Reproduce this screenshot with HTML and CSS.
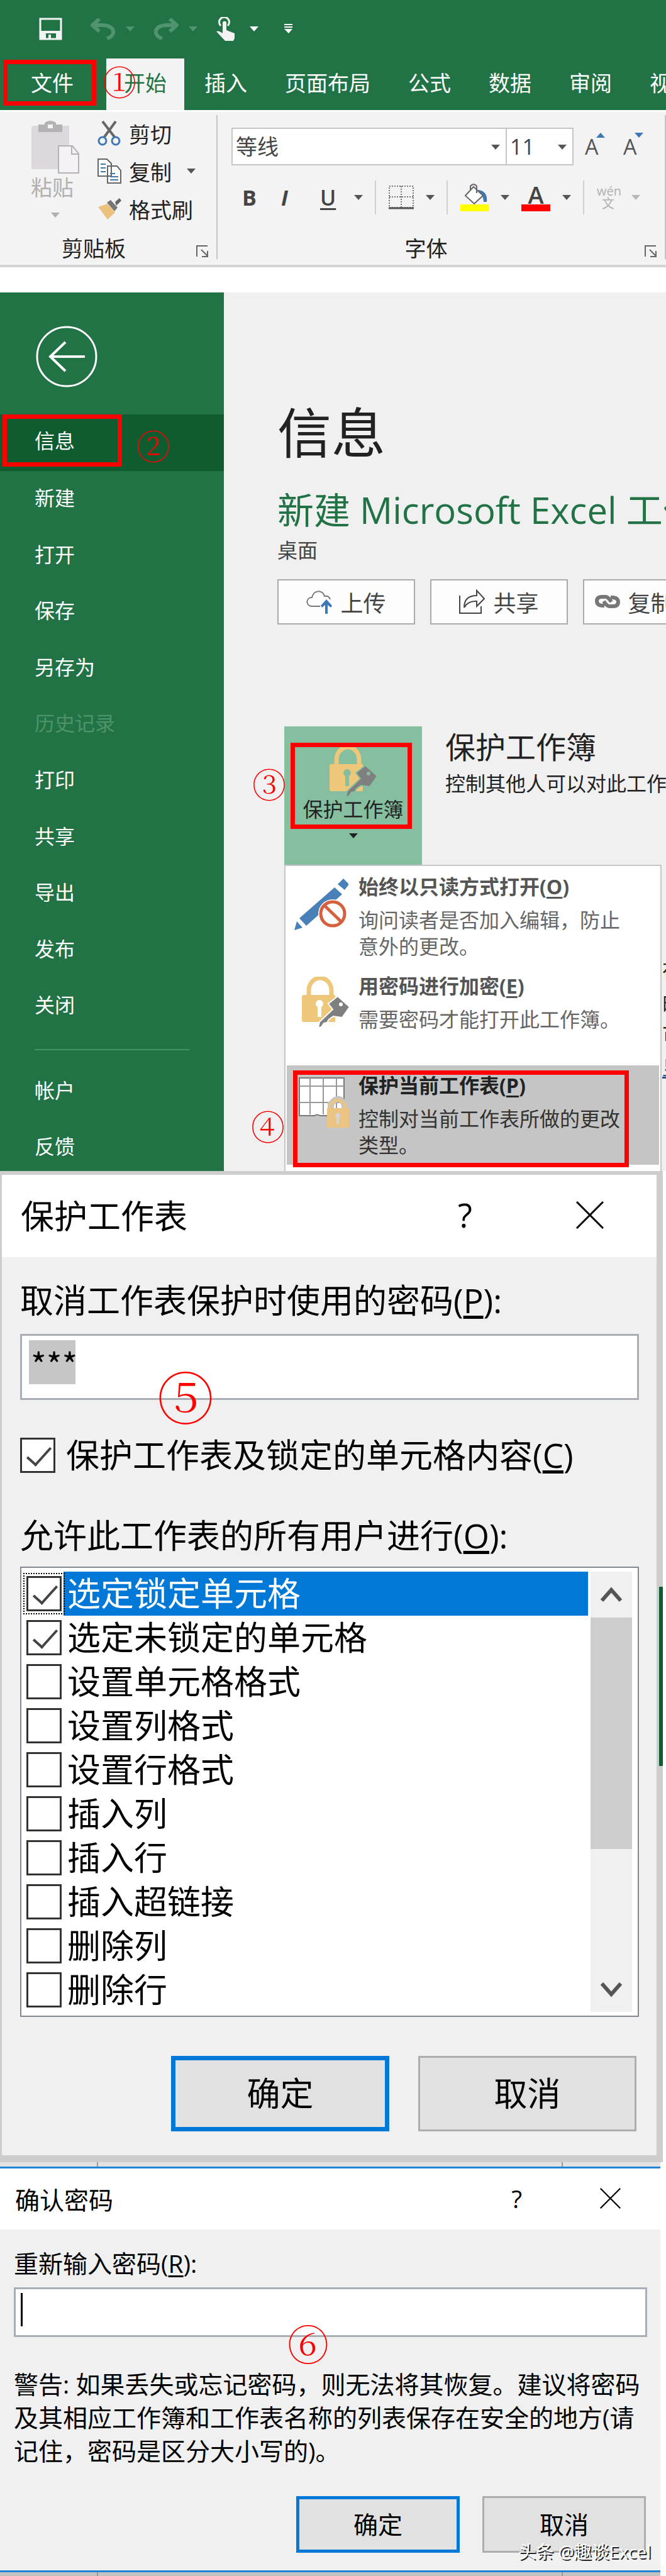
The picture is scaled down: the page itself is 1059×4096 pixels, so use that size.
FILE: index.html
```html
<!DOCTYPE html>
<html lang="zh-CN">
<head>
    <meta charset="UTF-8">
    <meta name="viewport" content="width=device-width, initial-scale=1.0">
    <title>保护工作表</title>
    <link rel="stylesheet" href="styles.css">
</head>
<body>
    <svg class="defs" aria-hidden="true">
        <symbol id="lock-key" viewBox="0 0 76 82">
            <path d="M11 30V22a17 19 0 0 1 36 0v8" fill="none" stroke="#efc77b" stroke-width="7"/>
            <path d="M3 29h50v43H3a3 3 0 0 1-3-3V32a3 3 0 0 1 3-3z" fill="#efc77b"/>
            <circle cx="28" cy="43" r="6" fill="var(--hole)"/>
            <path d="M25 44h6v20h-6z" fill="var(--hole)"/>
            <path d="M26 81l2-9 21-20-7-9 15-12 19 17-12 17-14-2-7 5-3 5-5 1-4 6z" fill="#7f7f7f" stroke="var(--hole)" stroke-width="2"/>
            <circle cx="62" cy="44" r="3" fill="var(--hole)"/>
        </symbol>
        <symbol id="launcher" viewBox="0 0 20 20">
            <path d="M1 18V1h17M8 7l10 10M18 9v9H9" fill="none" stroke="#666" stroke-width="2"/>
        </symbol>
    </svg>

    <header class="excel-top">
        <div class="quick-bar">
            <button class="save" aria-label="保存">
                <svg width="37" height="36" viewBox="0 0 37 36"><path d="M2 2h33v32H2z" fill="none" stroke="#f3f3f3" stroke-width="3"/><path d="M2 21h33v13h-8v-9H11v9H2z" fill="#f3f3f3"/><path d="M15 27h4v7h-4z" fill="#f3f3f3"/></svg>
            </button>
            <button class="undo dim" aria-label="撤消">
                <svg width="40" height="34" viewBox="0 0 40 34"><path d="M14 1L3 11l11 10M4 11h16c21 1 20 18 6 21" fill="none" stroke="currentColor" stroke-width="6"/></svg>
                <i class="caret"></i>
            </button>
            <button class="undo dim" aria-label="恢复">
                <svg width="40" height="34" viewBox="0 0 40 34"><path d="M26 1l11 10-11 10M36 11H20C-1 12 0 29 14 32" fill="none" stroke="currentColor" stroke-width="6"/></svg>
                <i class="caret"></i>
            </button>
            <button class="touch" aria-label="触摸模式">
                <svg width="29" height="38" viewBox="0 0 29 38"><path d="M7 14A8 8 0 1 1 18 14" fill="none" stroke="#f3f3f3" stroke-width="3"/><path d="M10 8q3-3 6 0v13l13 5v8l-2 4H14L0 23q4-2 10 3z" fill="#f3f3f3"/></svg>
                <i class="caret"></i>
            </button>
            <button class="customize" aria-label="自定义快速访问工具栏">
                <svg width="13" height="15" viewBox="0 0 13 15"><path d="M0 0h13v2H0zM0 4h13v2H0zM0 8h13l-6 7z" fill="#fff"/></svg>
            </button>
        </div>
        <nav class="tabs">
            <button class="tab file">文件</button>
            <button class="tab active">开始</button>
            <button class="tab">插入</button>
            <button class="tab">页面布局</button>
            <button class="tab">公式</button>
            <button class="tab">数据</button>
            <button class="tab">审阅</button>
            <button class="tab">视图</button>
            <span class="mark mark-1">①</span>
        </nav>
    </header>

    <section class="ribbon">
        <div class="group clipboard">
            <div class="group-body">
                <button class="paste">
                    <svg width="76" height="84" viewBox="0 0 76 84"><path d="M3 8h57v69H0V11z" fill="#dcd8dc"/><path d="M11 6h10V3q9-6 18 0v3h10v12H11z" fill="#b4b2b4"/><path d="M26 6h8v6h-8z" fill="#f3f3f3"/><path d="M43 40h22l10 12v31H43z" fill="#f5f2f7" stroke="#b4b2b4" stroke-width="2"/><path d="M64 40v13h11" fill="none" stroke="#b4b2b4" stroke-width="2"/></svg>
                    <span>粘贴</span>
                    <i class="caret"></i>
                </button>
                <div class="commands">
                    <button>
                        <svg width="38" height="40" viewBox="0 0 38 40"><path d="M8 1l20 26M29 1L10 27" stroke="#666" stroke-width="4"/><ellipse cx="8" cy="32" rx="6" ry="6" fill="none" stroke="#4178b0" stroke-width="3"/><ellipse cx="29" cy="32" rx="6" ry="6" fill="none" stroke="#4178b0" stroke-width="3"/></svg>
                        剪切
                    </button>
                    <button>
                        <svg width="38" height="40" viewBox="0 0 38 40"><path d="M1 1h14l7 7v20H1zM16 12h15l6 7v20H16z" fill="#fff" stroke="#666" stroke-width="2"/><path d="M5 9h8M5 15h8M5 21h8M20 24h8M20 29h13M20 34h13" stroke="#4178b0" stroke-width="2"/></svg>
                        复制
                        <i class="caret"></i>
                    </button>
                    <button>
                        <svg width="38" height="34" viewBox="0 0 38 34"><path d="M1 14l15-5 12 14-12 11z" fill="#ebc17c"/><path d="M15 7l6-4 11 12-5 6z" fill="#777"/><path d="M28 6l7-6 3 4-8 8z" fill="#666"/></svg>
                        格式刷
                    </button>
                </div>
            </div>
            <div class="group-foot">剪贴板<svg class="launcher"><use href="#launcher"/></svg></div>
        </div>

        <div class="group font">
            <div class="group-body">
                <div class="font-row">
                    <div class="pick pick-font">
                        <select aria-label="字体"><option>等线</option></select>
                        <i class="caret"></i>
                    </div>
                    <div class="pick pick-size">
                        <select aria-label="字号"><option>11</option></select>
                        <i class="caret"></i>
                    </div>
                    <button class="resize" aria-label="增大字号">A<i class="caret up"></i></button>
                    <button class="resize" aria-label="减小字号">A<i class="caret"></i></button>
                </div>
                <div class="format-row">
                    <button class="letter"><b>B</b></button>
                    <button class="letter"><b><em>I</em></b></button>
                    <button class="letter underline"><u>U</u></button>
                    <button class="more" aria-label="下划线选项"><i class="caret"></i></button>
                    <span class="rule"></span>
                    <button aria-label="边框"><svg width="40" height="38" viewBox="0 0 40 38"><path d="M1 1h38v34H1zM20 1v34M1 18h38" fill="none" stroke="#777" stroke-width="2" stroke-dasharray="2 2"/><path d="M0 36h40" stroke="#555" stroke-width="3"/></svg></button>
                    <button class="more" aria-label="边框选项"><i class="caret"></i></button>
                    <span class="rule"></span>
                    <button aria-label="填充颜色"><svg width="45" height="44" viewBox="0 0 45 44"><path d="M28 10q16 2 14 19h-5q0-11-9-13z" fill="#3d76b4"/><path d="M21 5l15 14-14 13L8 19z" fill="#fff" stroke="#666" stroke-width="2"/><path d="M16 11V4q5-6 10 0v11" fill="none" stroke="#666" stroke-width="2"/><path d="M0 33h45v11H0z" fill="#ff0"/></svg></button>
                    <button class="more" aria-label="填充颜色选项"><i class="caret"></i></button>
                    <button class="color-a">A</button>
                    <button class="more" aria-label="字体颜色选项"><i class="caret"></i></button>
                    <span class="rule"></span>
                    <button class="pinyin"><span>wén</span><span>文</span></button>
                    <button class="more pale" aria-label="拼音选项"><i class="caret"></i></button>
                </div>
            </div>
            <div class="group-foot">字体<svg class="launcher"><use href="#launcher"/></svg></div>
        </div>
    </section>

    <section class="backstage">
        <nav class="side">
            <button class="back" aria-label="返回">
                <svg width="98" height="98" viewBox="0 0 98 98"><circle cx="49" cy="49" r="47" fill="none" stroke="#fff" stroke-width="3"/><path d="M78 49H24M47 26L23 49l24 23" fill="none" stroke="#fff" stroke-width="4"/></svg>
            </button>
            <ul class="side-main">
                <li class="current"><a href="#">信息</a><span class="mark mark-2">②</span></li>
                <li><a href="#">新建</a></li>
                <li><a href="#">打开</a></li>
                <li><a href="#">保存</a></li>
                <li><a href="#">另存为</a></li>
                <li class="off"><a href="#">历史记录</a></li>
                <li><a href="#">打印</a></li>
                <li><a href="#">共享</a></li>
                <li><a href="#">导出</a></li>
                <li><a href="#">发布</a></li>
                <li><a href="#">关闭</a></li>
            </ul>
            <hr>
            <ul class="side-more">
                <li><a href="#">帐户</a></li>
                <li><a href="#">反馈</a></li>
            </ul>
        </nav>

        <main class="info">
            <h1>信息</h1>
            <h2>新建 Microsoft Excel 工作表</h2>
            <p class="place">桌面</p>
            <div class="actions">
                <button>
                    <svg width="42" height="38" viewBox="0 0 42 38"><path d="M22 26H8C-2 24 0 12 9 12 12-1 27 0 29 10q7-1 9 5" fill="none" stroke="#777" stroke-width="2"/><path d="M32 15l9 10-2 3-5-4v14h-4V24l-5 4-2-3z" fill="#3f77b5"/></svg>
                    上传
                </button>
                <button>
                    <svg width="42" height="40" viewBox="0 0 42 40"><path d="M1 10v28h34V27M8 29q0-19 20-19V2l12 13-12 12v-8q-14-1-20 10z" fill="none" stroke="#444" stroke-width="2"/></svg>
                    共享
                </button>
                <button class="copy-path">
                    <svg width="40" height="24" viewBox="0 0 40 24"><path d="M15 18h-4q-8-1-8-7 0-7 8-7h6q4 0 9 8M25 5h4q8 1 8 7 0 7-8 7h-6q-4 0-9-8" fill="none" stroke="#777" stroke-width="6"/></svg>
                    复制路径
                </button>
            </div>

            <div class="protect">
                <button class="protect-btn">
                    <svg width="76" height="82"><use href="#lock-key"/></svg>
                    <span>保护工作簿</span>
                    <i class="caret"></i>
                </button>
                <div class="protect-text">
                    <h3>保护工作簿</h3>
                    <p>控制其他人可以对此工作簿所做的更改类型。</p>
                </div>
                <span class="mark mark-3">③</span>

                <ul class="menu">
                    <li>
                        <svg width="86" height="84" viewBox="0 0 86 84"><path d="M0 84l4-14 9 10zM8 65l56-49 12 11-57 50zM69 11l9-9 9 9-7 9z" fill="#4a80b8" /><circle cx="61" cy="58" r="23" fill="#fff"/><circle cx="61" cy="58" r="19" fill="none" stroke="#d65f3d" stroke-width="5"/><path d="M47 44l28 27" stroke="#d65f3d" stroke-width="5"/></svg>
                        <div><h4>始终以只读方式打开(<u>O</u>)</h4><p>询问读者是否加入编辑，防止<br>意外的更改。</p></div>
                    </li>
                    <li>
                        <svg class="lock" width="76" height="82"><use href="#lock-key"/></svg>
                        <div><h4>用密码进行加密(<u>E</u>)</h4><p>需要密码才能打开此工作簿。</p></div>
                    </li>
                    <li class="hover">
                        <svg width="82" height="82" viewBox="0 0 82 82"><path d="M1 1h71v60H34q-5-3-9 0H1z" fill="#fff" stroke="#777" stroke-width="2"/><path d="M18 1v58M39 1v58M60 1v58M1 14h71M1 40h71" stroke="#999" stroke-width="2"/><path d="M51 50V43q12-17 22 0v7" fill="none" stroke="#c5c5c5" stroke-width="10"/><path d="M50 50V45q12-18 24 0v7" fill="none" stroke="#ebc382" stroke-width="5"/><path d="M45 49h35v31H45z" fill="#ebc382"/><circle cx="62" cy="61" r="4" fill="#d5d5d5"/><path d="M60 61h4v13h-4z" fill="#d5d5d5"/></svg>
                        <div><h4>保护当前工作表(<u>P</u>)</h4><p>控制对当前工作表所做的更改<br>类型。</p></div>
                        <span class="mark mark-4">④</span>
                    </li>
                </ul>
            </div>
            <div class="behind">
                <p>在</p>
                <p>的</p>
                <p>可</p>
                <p class="link">显</p>
            </div>
        </main>
    </section>

    <section class="desk">
        <form class="dialog">
            <div class="title-bar">
                <h2>保护工作表</h2>
                <button type="button" class="help">?</button>
                <button type="button" aria-label="关闭"><svg width="44" height="44" viewBox="0 0 44 44"><path d="M1 1l42 42M43 1L1 43" stroke="#000" stroke-width="3"/></svg></button>
            </div>
            <div class="dialog-body">
                <label for="password">取消工作表保护时使用的密码(<u>P</u>):</label>
                <div class="field">
                    <input type="text" id="password" value="***">
                    <span class="mark mark-5">⑤</span>
                </div>
                <label class="check-line"><input type="checkbox" checked> <span>保护工作表及锁定的单元格内容(<u>C</u>)</span></label>
                <p class="list-title">允许此工作表的所有用户进行(<u>O</u>):</p>
                <div class="list">
                    <div class="rows">
                        <label class="selected"><input type="checkbox" checked><span>选定锁定单元格</span></label>
                        <label><input type="checkbox" checked><span>选定未锁定的单元格</span></label>
                        <label><input type="checkbox"><span>设置单元格格式</span></label>
                        <label><input type="checkbox"><span>设置列格式</span></label>
                        <label><input type="checkbox"><span>设置行格式</span></label>
                        <label><input type="checkbox"><span>插入列</span></label>
                        <label><input type="checkbox"><span>插入行</span></label>
                        <label><input type="checkbox"><span>插入超链接</span></label>
                        <label><input type="checkbox"><span>删除列</span></label>
                        <label><input type="checkbox"><span>删除行</span></label>
                    </div>
                    <div class="scrollbar">
                        <button type="button" aria-label="向上"><svg width="34" height="26" viewBox="0 0 34 26"><path d="M2 22L17 5l15 17" fill="none" stroke="#555" stroke-width="6"/></svg></button>
                        <div class="thumb"></div>
                        <button type="button" aria-label="向下"><svg width="34" height="26" viewBox="0 0 34 26"><path d="M2 4l15 17L32 4" fill="none" stroke="#555" stroke-width="6"/></svg></button>
                    </div>
                </div>
                <div class="buttons">
                    <button type="button" class="ok">确定</button>
                    <button type="button">取消</button>
                </div>
            </div>
        </form>
    </section>

    <section class="confirm">
        <div class="strip"></div>
        <form class="dialog small">
            <div class="title-bar">
                <h2>确认密码</h2>
                <button type="button" class="help">?</button>
                <button type="button" aria-label="关闭"><svg width="33" height="33" viewBox="0 0 44 44"><path d="M1 1l42 42M43 1L1 43" stroke="#000" stroke-width="3"/></svg></button>
            </div>
            <div class="dialog-body">
                <label for="again">重新输入密码(<u>R</u>):</label>
                <div class="field">
                    <input type="text" id="again">
                    <span class="mark mark-6">⑥</span>
                </div>
                <p class="warning">警告: 如果丢失或忘记密码，则无法将其恢复。建议将密码<br>及其相应工作簿和工作表名称的列表保存在安全的地方(请<br>记住，密码是区分大小写的)。</p>
                <div class="buttons">
                    <button type="button" class="ok">确定</button>
                    <button type="button">取消</button>
                </div>
            </div>
        </form>
        <div class="strip dark"></div>
        <span class="watermark">头条 @趣谈Excel</span>
    </section>
</body>
</html>
```
FILE: styles.css
```css
* {
    margin: 0;
    padding: 0;
    box-sizing: border-box;
}

body {
    background: #fff;
    color: #222;
    font-family: "Open Sans", "Noto Sans CJK SC", sans-serif;
    overflow-x: hidden;
}

button {
    border: 0;
    background: none;
    color: inherit;
    font: inherit;
    white-space: nowrap;
}

ul {
    list-style: none;
}

a {
    color: inherit;
    text-decoration: none;
}

svg {
    display: block;
    flex-shrink: 0;
}

u {
    text-underline-offset: 4px;
}

.defs {
    position: absolute;
    width: 0;
    height: 0;
}

.caret {
    display: block;
    border: 7px solid transparent;
    border-top: 8px solid currentColor;
    border-bottom: 0;
}

/* red step numbers */
.mark {
    position: absolute;
    color: #f00;
    font-family: "Noto Serif CJK SC", "Noto Sans CJK SC", serif;
    font-size: 54px;
    font-weight: 300;
    line-height: 60px;
    width: 60px;
    text-align: center;
}

/* title bar and tabs */
.excel-top {
    background: #217346;
    color: #fff;
}

.quick-bar {
    display: flex;
    align-items: center;
    height: 93px;
    padding: 0 0 2px 62px;
}

.quick-bar button {
    display: flex;
    align-items: center;
}

.save {
    margin-right: 45px;
}

.undo {
    gap: 16px;
    margin-right: 30px;
}

.dim {
    color: #4f946e;
}

.touch {
    gap: 24px;
    margin-right: 41px;
}

.tabs {
    position: relative;
    display: flex;
    gap: 4px;
    height: 82px;
    overflow: hidden;
}

.tab {
    padding: 0 28px 8px;
    font-size: 34px;
    flex-shrink: 0;
}

.tab.file {
    width: 148px;
    height: 73px;
    margin: 2px 12px 0 5px;
    padding: 0 0 2px 8px;
    border: 7px solid #f00;
}

.tab.active {
    background: #f3f3f3;
    color: #217346;
}

.mark-1 {
    left: 160px;
    top: 6px;
}

/* ribbon */
.ribbon {
    display: flex;
    height: 250px;
    background: #f3f3f3;
    border-top: 3px solid #fff;
    border-bottom: 4px solid #d4d4d4;
}

.group {
    display: flex;
    flex-direction: column;
    margin: 5px 0 9px;
    border-right: 2px solid #c4c4c4;
    font-size: 34px;
}

.group-body {
    height: 195px;
}

.group-foot {
    position: relative;
    line-height: 34px;
    text-align: center;
}

.launcher {
    position: absolute;
    right: 12px;
    top: 12px;
    width: 20px;
    height: 20px;
}

.clipboard {
    width: 346px;
}

.clipboard .group-foot {
    padding-right: 46px;
}

.font .group-foot {
    padding-right: 48px;
}

.clipboard .group-body {
    display: flex;
    gap: 28px;
    padding-left: 49px;
}

.paste {
    display: flex;
    flex-direction: column;
    align-items: center;
    width: 78px;
    padding-top: 9px;
    color: #b1b1b1;
}

.paste span {
    align-self: flex-start;
    line-height: 44px;
    margin-bottom: 18px;
}

.commands button {
    display: flex;
    align-items: center;
    gap: 12px;
    height: 60px;
    padding-bottom: 2px;
}

.commands .caret,
.format-row .caret,
.pick .caret {
    color: #555;
}

.commands .caret {
    margin-left: 12px;
}

.font {
    flex: 1;
}

.font-row {
    display: flex;
    padding: 20px 34px 0 22px;
}

.pick {
    position: relative;
    height: 60px;
    border: 2px solid #c6c6c6;
    background: #fff;
}

.pick-font {
    flex: 1;
}

.pick-size {
    width: 108px;
    margin: 0 18px 0 -2px;
}

.pick select {
    width: 100%;
    height: 100%;
    padding-left: 5px;
    border: 0;
    background: none;
    color: #444;
    font: inherit;
    appearance: none;
}

.pick .caret {
    position: absolute;
    right: 9px;
    top: 25px;
}

.resize {
    position: relative;
    width: 32px;
    color: #555;
    text-align: left;
    font-size: 34px;
}

.resize + .resize {
    margin-left: 29px;
}

.resize .caret {
    position: absolute;
    right: 0;
    top: 8px;
    color: #3f77b5;
}

.caret.up {
    transform: rotate(180deg);
}

.format-row {
    display: flex;
    align-items: center;
    height: 54px;
    margin-top: 24px;
    padding-left: 39px;
    color: #444;
}

.letter {
    width: 62px;
    text-align: left;
}

.letter.underline {
    width: 35px;
    font-weight: 600;
}

.more {
    padding: 0 19px;
}

.format-row .pale .caret {
    color: #b8b8b8;
}

.rule {
    width: 2px;
    height: 54px;
    margin-right: 20px;
    background: #d0d0d0;
}

.color-a {
    width: 46px;
    height: 44px;
    border-bottom: 11px solid #f00;
    font-size: 38px;
    font-weight: 600;
    line-height: 30px;
}

.pinyin {
    width: 36px;
    color: #b0b0b0;
    font-size: 20px;
    line-height: 20px;
}

.pinyin span {
    display: block;
}

/* backstage view */
.backstage {
    display: flex;
    margin-top: 40px;
    overflow: hidden;
    background: #f0f0f0;
}

.side {
    flex: 0 0 356px;
    padding-top: 53px;
    background: #217346;
    color: #fff;
    font-size: 32px;
}

.back {
    display: block;
    margin: 0 0 43px 57px;
}

.side-main {
    display: grid;
    grid-auto-rows: 1fr;
    height: 985px;
}

.side li {
    position: relative;
    display: flex;
    align-items: center;
    padding: 0 0 6px 55px;
}

.side .current {
    background: #0e5c2f;
    padding-left: 4px;
}

.current a {
    width: 190px;
    height: 83px;
    padding-left: 44px;
    border: 7px solid #f00;
    line-height: 70px;
}

.side .off {
    color: #4d9369;
}

.mark-2 {
    left: 214px;
    top: 19px;
}

.side hr {
    margin: 24px 55px 20px;
    border: 0;
    border-top: 2px solid #439467;
}

.side-more li {
    height: 90px;
}

.side-more li:last-child {
    height: 82px;
    padding-bottom: 0;
}

.info {
    flex: 1;
    min-width: 0;
    padding: 173px 0 0 85px;
    white-space: nowrap;
}

.info h1 {
    font-size: 86px;
    font-weight: 400;
    line-height: 100px;
}

.info h2 {
    margin-top: 38px;
    color: #217346;
    font-size: 58px;
    font-weight: 400;
    line-height: 70px;
}

.place {
    margin-top: 9px;
    color: #444;
    font-size: 32px;
    line-height: 40px;
}

.actions {
    display: flex;
    gap: 24px;
    margin-top: 26px;
}

.actions button {
    display: flex;
    align-items: center;
    justify-content: center;
    gap: 12px;
    flex: 0 0 219px;
    height: 72px;
    border: 2px solid #ababab;
    background: #fdfdfd;
    color: #444;
    font-size: 36px;
}

.actions .copy-path {
    flex-basis: 235px;
}

.protect {
    position: relative;
    display: flex;
    gap: 37px;
    margin: 162px 0 0 11px;
}

.protect-btn {
    --hole: #86bf9f;
    display: flex;
    flex-direction: column;
    align-items: center;
    flex: 0 0 219px;
    height: 220px;
    padding-top: 31px;
    background: #86bf9f;
    font-size: 32px;
    position: relative;
}

.protect-btn span {
    line-height: 38px;
    margin-bottom: 19px;
}

.protect-btn::after {
    content: "";
    position: absolute;
    inset: 26px 16px 57px 10px;
    border: 7px solid #f00;
}

.protect-text {
    padding-top: 3px;
}

.protect-text h3 {
    font-size: 48px;
    font-weight: 400;
    line-height: 60px;
}

.protect-text p {
    margin-top: 8px;
    font-size: 32px;
    line-height: 40px;
}

.mark-3 {
    left: -54px;
    top: 61px;
}

.menu {
    position: absolute;
    top: 220px;
    left: 0;
    width: 600px;
    height: 500px;
    padding: 1px 2px;
    border: 2px solid #c6c6c6;
    background: #fff;
    color: #666;
    font-size: 32px;
}

.menu li {
    --hole: #fff;
    position: relative;
    display: flex;
    height: 158px;
    padding: 11px 0 0 16px;
}

.menu svg {
    margin: 6px 0 0 -4px;
}

.menu .lock {
    margin-left: 8px;
}

.menu li > div {
    position: absolute;
    left: 114px;
    top: 11px;
}

.menu h4 {
    color: #555;
    font-size: 32px;
    line-height: 42px;
}

.menu p {
    margin-top: 11px;
    line-height: 42px;
}

.menu .hover {
    background: #c5c5c5;
    color: #333;
}

.menu .hover svg {
    margin: 8px 0 0 3px;
}

.menu .hover h4 {
    color: #222;
}

.menu .hover::after {
    content: "";
    position: absolute;
    inset: 8px 48px -4px 10px;
    border: 7px solid #f00;
}

.mark-4 {
    left: -60px;
    top: 66px;
}

.behind {
    margin-top: 141px;
    padding-left: 612px;
    font-size: 32px;
    line-height: 52px;
}

.behind .link {
    color: #2a579a;
    text-decoration: underline;
}

/* dialogs */
.desk {
    margin-right: 5px;
    padding: 6px 10px 11px 3px;
    background: linear-gradient(#0e5c2f, #0e5c2f) no-repeat right 661px / 6px 285px, #cdcdcd;
}

.dialog {
    background: #f0f0f0;
    color: #000;
    font-size: 53px;
}

.title-bar {
    display: flex;
    align-items: center;
    height: 131px;
    padding: 0 84px 4px 30px;
    background: #fff;
}

.title-bar h2 {
    flex: 1;
    font-size: 53px;
    font-weight: 400;
}

.help {
    margin-right: 165px;
}

.dialog-body {
    padding: 39px 28px 38px 29px;
    line-height: 60px;
}

.dialog-body label {
    display: block;
}

.field {
    position: relative;
    margin-top: 23px;
}

.field input {
    display: block;
    width: 100%;
    height: 105px;
    padding: 0 14px 12px;
    border: 3px solid #a9adb5;
    background: linear-gradient(#c6c6c6, #c6c6c6) no-repeat 11px 7px / 74px 70px, #fff;
    font: inherit;
    font-family: "Noto Sans CJK SC", sans-serif;
}

.mark-5 {
    left: 213px;
    top: 47px;
    width: 100px;
    font-size: 90px;
    line-height: 100px;
}

input[type="checkbox"] {
    position: relative;
    flex-shrink: 0;
    width: 56px;
    height: 56px;
    border: 3px solid #333;
    background: #fff;
    appearance: none;
}

input[type="checkbox"]:checked::before {
    content: "";
    position: absolute;
    left: 17px;
    top: 3px;
    width: 16px;
    height: 34px;
    border: solid #444;
    border-width: 0 4px 4px 0;
    transform: rotate(42deg);
}

.dialog-body .check-line {
    display: flex;
    align-items: center;
    gap: 17px;
    margin-top: 58px;
}

.list-title {
    margin-top: 68px;
}

.list {
    display: flex;
    margin-top: 19px;
    padding: 6px 9px 6px 8px;
    border: 2px solid #828790;
    background: #fff;
}

.rows {
    flex: 1;
}

.dialog-body .rows label {
    display: flex;
    align-items: center;
    height: 70px;
}

.rows span {
    flex: 1;
    margin-left: 3px;
    padding-left: 6px;
    line-height: 70px;
}

.selected span {
    background: #0078d7;
    color: #fff;
}

.selected input {
    outline: 2px dotted #000;
    outline-offset: 3px;
}

.scrollbar {
    display: flex;
    flex-direction: column;
    align-items: stretch;
    width: 66px;
    margin-left: 4px;
    background: #f0f0f0;
}

.scrollbar button {
    display: flex;
    align-items: center;
    justify-content: center;
    height: 73px;
}

.thumb {
    height: 368px;
    margin-bottom: auto;
    background: #cdcdcd;
}

.buttons {
    display: flex;
    justify-content: flex-end;
    gap: 46px;
    margin: 62px 4px 0 0;
}

.buttons button {
    width: 347px;
    height: 120px;
    border: 3px solid #adadad;
    background: #e1e1e1;
}

.buttons .ok {
    border: 7px solid #0078d7;
}

/* confirm password */
.confirm {
    position: relative;
    margin-right: 9px;
}

.strip {
    height: 7px;
    background: linear-gradient(#999, #999) no-repeat 154px 0 / 2px 7px, linear-gradient(#999, #999) no-repeat 893px 0 / 2px 7px, #e4e2e0;
}

.strip.dark {
    background-color: #c4c2c1;
}

.small {
    border: solid #2084d8;
    border-width: 3px 0;
    font-size: 39px;
}

.small .title-bar {
    height: 97px;
    padding: 0 63px 2px 24px;
}

.small h2 {
    font-size: 39px;
}

.small .help {
    margin-right: 124px;
}

.small .dialog-body {
    padding: 29px 21px 28px 22px;
    line-height: 50px;
}

.small .field {
    margin-top: 13px;
}

.small .field input {
    height: 79px;
    background: linear-gradient(#000, #000) no-repeat 8px 6px / 3px 53px, #fff;
}

.mark-6 {
    left: 428px;
    top: 48px;
    width: 80px;
    font-size: 66px;
    line-height: 80px;
}

.warning {
    margin-top: 48px;
    line-height: 53px;
    white-space: nowrap;
}

.small .buttons {
    gap: 36px;
    margin: 46px 2px 0 0;
}

.small .buttons button {
    width: 260px;
    height: 90px;
}

.small .buttons .ok {
    border-width: 5px;
}

.watermark {
    position: absolute;
    right: 15px;
    bottom: 20px;
    color: #fff;
    font-size: 28px;
    line-height: 40px;
    text-shadow: 2px 2px 0 #222;
}
```
